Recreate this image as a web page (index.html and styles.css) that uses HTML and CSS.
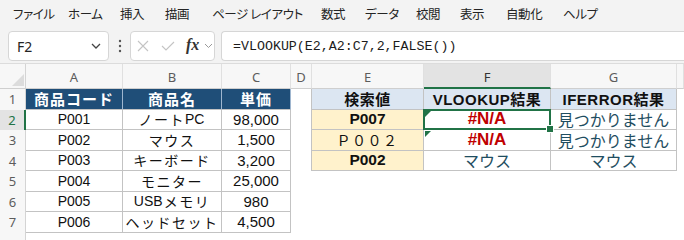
FILE: index.html
```html
<!DOCTYPE html>
<html lang="ja">
<head>
    <meta charset="UTF-8">
    <meta name="viewport" content="width=device-width, initial-scale=1.0">
    <title>VLOOKUP と IFERROR</title>
    <link rel="stylesheet" href="styles.css">
</head>
<body>
    <!-- Ribbon tabs -->
    <div class="menu">
        <span>ファイル</span>
        <span>ホーム</span>
        <span>挿入</span>
        <span>描画</span>
        <span>ページ レイアウト</span>
        <span>数式</span>
        <span>データ</span>
        <span>校閲</span>
        <span>表示</span>
        <span>自動化</span>
        <span>ヘルプ</span>
    </div>

    <!-- Name box + formula bar -->
    <div class="formula-bar">
        <div class="name-box">
            <span>F2</span>
            <svg width="10" height="6" viewBox="0 0 10 6"><path d="M1 1 L5 5 L9 1" fill="none" stroke="#444" stroke-width="1.3"/></svg>
        </div>
        <div class="dots">
            <svg width="4" height="14" viewBox="0 0 4 14"><circle cx="2" cy="2" r="1.2" fill="#555"/><circle cx="2" cy="7" r="1.2" fill="#555"/><circle cx="2" cy="12" r="1.2" fill="#555"/></svg>
        </div>
        <div class="fx-box">
            <svg class="fx-icon" width="12" height="12" viewBox="0 0 12 12"><path d="M1 1 L11 11 M11 1 L1 11" stroke="#c4c4c4" stroke-width="1.1"/></svg>
            <svg class="fx-icon" width="14" height="10" viewBox="0 0 14 10"><path d="M1 5 L5 9 L13 1" fill="none" stroke="#c4c4c4" stroke-width="1.1"/></svg>
            <span class="fx">fx</span>
            <svg width="9" height="6" viewBox="0 0 9 6"><path d="M1 1 L4.5 4.5 L8 1" fill="none" stroke="#999" stroke-width="1"/></svg>
        </div>
        <div class="formula">=VLOOKUP(E2,A2:C7,2,FALSE())</div>
    </div>

    <!-- Worksheet -->
    <div class="sheet">
        <div class="row head-row">
            <div class="c rh corner"><svg width="12" height="12" viewBox="0 0 12 12"><polygon points="12,0 12,12 0,12" fill="#dcdcdc"/></svg></div>
            <div class="c ch wa">A</div>
            <div class="c ch wb">B</div>
            <div class="c ch wc">C</div>
            <div class="c ch wd">D</div>
            <div class="c ch we">E</div>
            <div class="c ch wf active-col">F</div>
            <div class="c ch wg">G</div>
            <div class="c ch wh"></div>
        </div>

        <div class="row">
            <div class="c rh">1</div>
            <div class="c wa t th-dark">商品コード</div>
            <div class="c wb t th-dark">商品名</div>
            <div class="c wc t th-dark">単価</div>
            <div class="c wd edge"></div>
            <div class="c we t th-light">検索値</div>
            <div class="c wf t th-light">VLOOKUP結果</div>
            <div class="c wg t th-light">IFERROR結果</div>
            <div class="c wh"></div>
        </div>

        <div class="row">
            <div class="c rh active-row">2</div>
            <div class="c wa t code">P001</div>
            <div class="c wb t kana">ノート<span class="latin">PC</span></div>
            <div class="c wc t num">98,000</div>
            <div class="c wd edge"></div>
            <div class="c we t key">P007</div>
            <div class="c wf t err flag selected">#N/A<span class="handle"></span></div>
            <div class="c wg t res">見つかりません</div>
            <div class="c wh"></div>
        </div>

        <div class="row">
            <div class="c rh">3</div>
            <div class="c wa t code">P002</div>
            <div class="c wb t kana">マウス</div>
            <div class="c wc t num">1,500</div>
            <div class="c wd edge"></div>
            <div class="c we t key wide">Ｐ００２</div>
            <div class="c wf t err flag">#N/A</div>
            <div class="c wg t res">見つかりません</div>
            <div class="c wh"></div>
        </div>

        <div class="row">
            <div class="c rh">4</div>
            <div class="c wa t code">P003</div>
            <div class="c wb t kana">キーボード</div>
            <div class="c wc t num">3,200</div>
            <div class="c wd edge"></div>
            <div class="c we t key">P002</div>
            <div class="c wf t res">マウス</div>
            <div class="c wg t res">マウス</div>
            <div class="c wh"></div>
        </div>

        <div class="row">
            <div class="c rh">5</div>
            <div class="c wa t code">P004</div>
            <div class="c wb t kana">モニター</div>
            <div class="c wc t num">25,000</div>
            <div class="c wd"></div>
            <div class="c we"></div>
            <div class="c wf"></div>
            <div class="c wg"></div>
            <div class="c wh"></div>
        </div>

        <div class="row">
            <div class="c rh">6</div>
            <div class="c wa t code">P005</div>
            <div class="c wb t kana"><span class="latin">USB</span>メモリ</div>
            <div class="c wc t num">980</div>
            <div class="c wd"></div>
            <div class="c we"></div>
            <div class="c wf"></div>
            <div class="c wg"></div>
            <div class="c wh"></div>
        </div>

        <div class="row">
            <div class="c rh">7</div>
            <div class="c wa t code">P006</div>
            <div class="c wb t kana">ヘッドセット</div>
            <div class="c wc t num">4,500</div>
            <div class="c wd"></div>
            <div class="c we"></div>
            <div class="c wf"></div>
            <div class="c wg"></div>
            <div class="c wh"></div>
        </div>

        <div class="row">
            <div class="c rh last">8</div>
        </div>
    </div>
</body>
</html>
```

FILE: styles.css
```css
body {
    margin: 0;
    background-color: #f3f3f3;
    font-family: "Noto Sans CJK JP", sans-serif;
    overflow: hidden;
}
/* Ribbon tab row */
.menu {
    display: flex;
    align-items: center;
    height: 26px;
    padding-left: 13px;
    font-size: 12.5px;
    letter-spacing: -0.4px;
    color: #242424;
    font-feature-settings: "palt";
}
.menu span {
    flex: none;
    white-space: nowrap;
}
/* slot widths so each tab starts where Excel puts it */
.menu span:nth-child(1) { width: 55px; }
.menu span:nth-child(2) { width: 52px; }
.menu span:nth-child(3) { width: 45px; }
.menu span:nth-child(4) { width: 47px; }
.menu span:nth-child(5) { width: 109px; }
.menu span:nth-child(6) { width: 44px; }
.menu span:nth-child(7) { width: 51px; }
.menu span:nth-child(8) { width: 44px; }
.menu span:nth-child(9) { width: 46px; }
.menu span:nth-child(10) { width: 57px; }
/* Formula bar */
.formula-bar {
    display: flex;
    align-items: flex-start;
    height: 32px;
    padding: 5px 0 0 8px;
    box-sizing: content-box;
}
.name-box,
.fx-box,
.formula {
    height: 30px;
    box-sizing: border-box;
    background-color: white;
    border: 1px solid #d6d6d6;
    border-radius: 4px;
    display: flex;
    align-items: center;
}
.name-box {
    width: 101px;
    padding: 0 7px 0 8px;
    justify-content: space-between;
    font-family: "Noto Sans", sans-serif;
    font-size: 14px;
    color: #242424;
}
.dots {
    width: 21px;
    height: 30px;
    display: flex;
    align-items: center;
    justify-content: center;
}
.fx-box {
    width: 85px;
    padding-left: 6px;
}
.fx-box .fx-icon {
    margin-right: 12px;
}
.fx-box .fx {
    font-family: "Liberation Serif", serif;
    font-style: italic;
    font-weight: bold;
    font-size: 16px;
    color: #333;
    margin: -3px 5px 0 -1px;
}
.formula {
    flex: 1;
    margin-left: 6px;
    border-right: none;
    border-radius: 4px 0 0 4px;
    padding-left: 11px;
    font-family: "Liberation Mono", monospace;
    font-size: 13.3px;
    color: #1b1b1b;
}
/* Worksheet grid */
.sheet {
    background-color: white;
    border-top: 1px solid #dcdcdc;
}
.row {
    display: flex;
    height: 20.5px;
}
.head-row {
    height: 25px;
}
.c {
    flex: none;
    box-sizing: border-box;
    display: flex;
    align-items: center;
    justify-content: center;
    position: relative;
    font-family: "Liberation Sans", "Noto Sans CJK JP", sans-serif;
    color: #111;
    white-space: nowrap;
}
.wa { width: 97px; }
.wb { width: 99px; }
.wc { width: 69px; }
.wd { width: 21px; }
.we { width: 112px; }
.wf { width: 127px; }
.wg { width: 126px; }
.wh { flex: 1; }
/* Row and column headings */
.rh {
    width: 26px;
    background-color: #f7f7f7;
    border-right: 1px solid #d4d4d4;
    font-family: "Noto Sans", sans-serif;
    font-size: 13px;
    color: #5c5c5c;
}
.rh.last {
    align-items: flex-start;
    padding-top: 3px;
}
.ch {
    background-color: #f7f7f7;
    border-right: 1px solid #e0e0e0;
    border-bottom: 1px solid #cfcfcf;
    font-family: "Noto Sans", sans-serif;
    font-size: 13px;
    color: #5c5c5c;
    padding-top: 2px;
}
.corner {
    border-bottom: 1px solid #cfcfcf;
    align-items: flex-end;
    justify-content: flex-end;
    padding: 0 1px 2px 0;
}
.active-col {
    background-color: #e3e3e3;
    border-bottom: 2px solid #217346;
    color: #333;
}
.active-row {
    background-color: #e3e3e3;
    border-right: 2px solid #217346;
    color: #217346;
}
/* Table cells */
.t {
    border-right: 1px solid #c3c3c3;
    border-bottom: 1px solid #c3c3c3;
}
.edge {
    border-right: 1px solid #c3c3c3;
}
.th-dark {
    background-color: #1f4e78;
    color: white;
    font-weight: bold;
    font-size: 15px;
    letter-spacing: 1px;
    border-right-color: #9fb6cf;
}
.th-light {
    background-color: #dce6f2;
    font-weight: bold;
    font-size: 15px;
    letter-spacing: 0.5px;
}
.code {
    font-size: 14px;
}
.num {
    font-size: 15px;
}
.kana {
    font-size: 14px;
    letter-spacing: 1.5px;
}
.kana .latin {
    letter-spacing: 0;
    margin-right: 1px;
}
.key {
    background-color: #fff2cc;
    font-weight: bold;
    font-size: 15.5px;
}
.key.wide {
    font-weight: normal;
    font-size: 14px;
    letter-spacing: 1.5px;
}
.err {
    color: #c00000;
    font-weight: bold;
    font-size: 17px;
}
.res {
    color: #1f4e61;
    font-size: 16px;
}
/* Error flag in the top left corner */
.flag::before {
    content: "";
    position: absolute;
    left: 1px;
    top: 1px;
    border-top: 6px solid #217346;
    border-right: 6px solid transparent;
}
/* Active cell outline */
.selected::after {
    content: "";
    position: absolute;
    left: -1px;
    top: -1px;
    right: -1px;
    bottom: -1px;
    border: 2px solid #217346;
}
.handle {
    position: absolute;
    right: -4px;
    bottom: -4px;
    width: 6px;
    height: 6px;
    background-color: #217346;
    border: 1px solid white;
    z-index: 2;
}
```
